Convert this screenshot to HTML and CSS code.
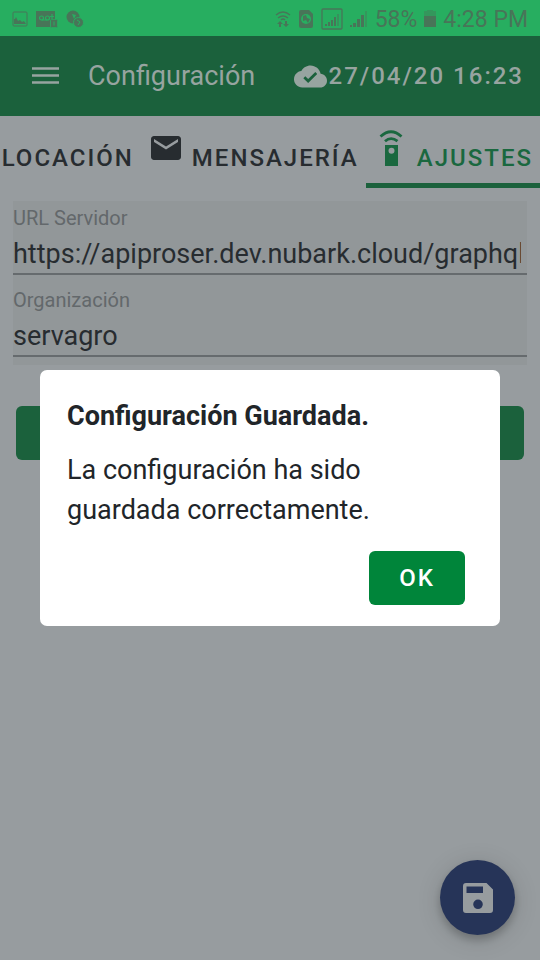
FILE: index.html
```html
<!DOCTYPE html>
<html lang="es">
<head>
<meta charset="utf-8">
<meta name="viewport" content="width=device-width, initial-scale=1">
<title>Configuración</title>
<link rel="stylesheet" href="styles.css">
</head>
<body>
<div class="status">
  <div class="status-group">
    <svg width="16" height="16" viewBox="0 0 16 16"><rect x="1" y="1" width="14" height="14" rx="1" fill="none" stroke="currentColor"/><path d="M2 13V8l1 0 1-2 2 4 2-1 2 2 2-1 2 3z" fill="currentColor"/></svg>
    <svg class="status-voice" width="22" height="18" viewBox="0 0 22 18"><path d="M0 1h19v9h-5v7H0z" fill="currentColor"/><g fill="none" stroke="#27ae60" stroke-width="1.200"><circle cx="5.500" cy="8" r="2"/><circle cx="11.500" cy="8" r="2"/><path d="M5.500 10h6M16 4v5M14 6.500h4"/></g><rect x="14.500" y="9.500" width="7" height="8" rx="1" fill="currentColor" stroke="#27ae60" stroke-width=".7"/><path d="M18 11.500v4" stroke="#27ae60"/></svg>
    <svg width="18" height="18" viewBox="0 0 18 18"><circle cx="7" cy="7" r="6.500" fill="currentColor"/><path d="M6 4l4 1-2 4z" fill="#27ae60"/><circle cx="12.500" cy="12.500" r="5" fill="currentColor" stroke="#27ae60"/><path d="M11 10l3 2-2 3" fill="none" stroke="#27ae60"/></svg>
  </div>
  <div class="status-group status-right">
    <svg width="16" height="20" viewBox="0 0 16 20"><path d="M1 6q7-6 14 0M3 9q5-4 10 0M6 11q2-2 4 0" fill="none" stroke="currentColor" stroke-width="1.300"/><path d="M5 12l3 3H6v3H4v-3H2zM11 18l-3-3h2v-3h2v3h2z" fill="currentColor"/></svg>
    <svg width="16" height="20" viewBox="0 0 16 20"><path d="M3 1h8l4 4v12q0 2-2 2H3q-2 0-2-2V3q0-2 2-2z" fill="currentColor"/><circle cx="8" cy="10" r="5" fill="#27ae60"/><path d="M5 7l3-1 1 3 3 1-2 4-2-3-3 1z" fill="currentColor"/></svg>
    <svg class="status-sim" width="22" height="22" viewBox="0 0 22 22"><rect x="1" y="1" width="20" height="20" rx="1" fill="none" stroke="currentColor" stroke-width="1.300"/><path d="M4 16h2v2H4zM7 14h2v4H7zM10 12h2v6h-2zM13 9h2v9h-2z" fill="currentColor"/><path d="M16 6h2v12h-2z" fill="currentColor" opacity=".5"/></svg>
    <svg width="18" height="20" viewBox="0 0 18 20"><path d="M0 16h2v2H0zM3 14h3v4H3zM7 10h3v8H7zM11 6h3v12h-3z" fill="currentColor"/><path d="M15 2h2v16h-2z" fill="currentColor" opacity=".4"/></svg>
    <span>58%</span>
    <svg width="12" height="20" viewBox="0 0 12 20"><path d="M3 1h6v1h3v5H0V2h3z" fill="currentColor" opacity=".4"/><path d="M0 7h12v11H0z" fill="currentColor"/></svg>
    <span>4:28 PM</span>
  </div>
</div>

<header class="bar">
  <button class="menu" type="button" aria-label="Menú"><svg width="28" height="18" viewBox="0 0 28 18"><path d="M0 1.500h27M0 8.500h27M0 15.500h27" stroke="currentColor" stroke-width="2.700"/></svg></button>
  <h1>Configuración</h1>
  <button class="sync" type="button"><svg width="33" height="33" viewBox="0 0 24 24"><path fill="currentColor" d="M19.350 10.040C18.670 6.590 15.640 4 12 4 9.110 4 6.600 5.640 5.350 8.040 2.340 8.360 0 10.910 0 14c0 3.310 2.690 6 6 6h13c2.760 0 5-2.240 5-5 0-2.640-2.050-4.780-4.650-4.960zM10.300 16.700l-3.500-3.500 1.400-1.400 2.100 2.100 5.200-5.200 1.400 1.400z"/></svg>27/04/20 16:23</button>
</header>

<nav class="tabs" role="tablist">
  <button class="tab" type="button" role="tab">LOCACIÓN</button>
  <button class="tab" type="button" role="tab"><svg width="36" height="36" viewBox="0 0 24 24"><path fill="currentColor" d="M20 4H4c-1.100 0-2 .9-2 2v12c0 1.100.9 2 2 2h16c1.100 0 2-.9 2-2V6c0-1.100-.9-2-2-2zm0 4-8 5-8-5V6l8 5 8-5v2z"/></svg>MENSAJERÍA</button>
  <button class="tab active" type="button" role="tab" aria-selected="true"><svg width="36" height="36" viewBox="0 0 36 36"><path d="M7.500 6.500Q18-3 28.500 6.500M12 11.200Q18 6 24.500 11.200" fill="none" stroke="currentColor" stroke-width="2.800"/><path fill="currentColor" fill-rule="evenodd" d="M12 15h13v21H12zM18.500 17.800a3 3 0 1 0 0 6 3 3 0 1 0 0-6z"/></svg>AJUSTES</button>
</nav>

<main>
  <form class="form">
    <div class="field">
      <label for="url">URL Servidor</label>
      <input id="url" type="text" value="https://apiproser.dev.nubark.cloud/graphql">
    </div>
    <div class="field">
      <label for="org">Organización</label>
      <input id="org" type="text" value="servagro">
    </div>
    <button class="submit" type="button" aria-label="Guardar configuración"></button>
  </form>
</main>

<button class="fab" type="button" aria-label="Guardar"><svg width="32" height="32" viewBox="0 0 32 32"><path fill="currentColor" fill-rule="evenodd" d="M4 1h20.500L31 7.500V28q0 3-3 3H4q-3 0-3-3V4q0-3 3-3zM4.500 4.500v6.500h16.500V4.500zM16 17.500a4.800 4.800 0 1 0 0 9.600 4.800 4.800 0 1 0 0-9.600z"/></svg></button>

<div class="overlay">
  <section class="dialog" role="dialog" aria-labelledby="dialog-title">
    <h2 id="dialog-title">Configuración Guardada.</h2>
    <p>La configuración ha sido guardada correctamente.</p>
    <button class="ok" type="button">OK</button>
  </section>
</div>
</body>
</html>
```

FILE: styles.css
```css
* {
  box-sizing: border-box;
}

body {
  margin: 0;
  min-height: 100vh;
  background: #979c9f;
  color: #272c30;
  font-family: Roboto, sans-serif;
  font-size: 27px;
}

button,
input {
  border: 0;
  padding: 0;
  background: none;
  color: inherit;
  font: inherit;
}

svg {
  display: block;
  flex: none;
}

.status {
  display: flex;
  justify-content: space-between;
  align-items: center;
  height: 36px;
  padding: 2px 12px 0;
  background: #27ae60;
  color: #487558;
  font-size: 23px;
}

.status-group {
  display: flex;
  align-items: center;
  gap: 8px;
}

.status-right {
  gap: 7px;
}

.bar {
  display: flex;
  align-items: center;
  height: 80px;
  padding: 0 16px 0 32px;
  background: #1b613c;
  color: #97a4a0;
}

.menu {
  margin-right: 28px;
}

.bar h1 {
  margin: 0;
  font-size: 27px;
  font-weight: 400;
}

.sync {
  display: flex;
  align-items: center;
  gap: 2px;
  margin-left: auto;
  font-size: 24px;
  font-weight: 500;
  letter-spacing: 2px;
  white-space: nowrap;
}

.tabs {
  display: flex;
  justify-content: flex-end;
  height: 72px;
  overflow: hidden;
}

.tab {
  display: flex;
  flex: none;
  align-items: center;
  gap: 8px;
  padding: 16px 7px 0;
  border-bottom: 5px solid transparent;
  font-size: 24px;
  font-weight: 500;
  letter-spacing: 2px;
}

.tab svg {
  margin-bottom: 20px;
}

.tab.active {
  border-color: #1b613c;
  color: #1a683f;
}

.form {
  padding: 13px 13px 0;
}

.field {
  height: 82px;
  padding-top: 4px;
  background: #929799;
}

.field label {
  display: block;
  color: #63686b;
  font-size: 20px;
  line-height: 26px;
}

.field input {
  display: block;
  width: 100%;
  height: 44px;
  padding: 4px 6px 0 0;
  border-bottom: 2px solid #666b6e;
}

.submit {
  display: block;
  width: calc(100% - 6px);
  height: 54px;
  margin: 41px auto 0;
  border-radius: 6px;
  background: #1b613c;
}

.fab {
  position: fixed;
  right: 25px;
  bottom: 25px;
  display: grid;
  place-items: center;
  width: 75px;
  height: 75px;
  border-radius: 50%;
  background: #263458;
  color: #979c9f;
  box-shadow: 0 5px 9px rgba(0, 0, 0, .2), 0 4px 24px rgba(0, 0, 0, .15);
}

.overlay {
  position: fixed;
  inset: 36px 0 0;
  display: flex;
  align-items: center;
  padding: 0 40px;
}

.dialog {
  display: flex;
  flex-direction: column;
  width: 100%;
  padding: 26px 35px 21px 27px;
  border-radius: 7px;
  background: #fff;
  color: #212529;
  line-height: 40px;
}

.dialog h2 {
  margin: 0 0 14px;
  font-size: 27px;
  font-weight: 700;
}

.dialog p {
  max-width: 340px;
  margin: 0 0 21px;
}

.ok {
  align-self: flex-end;
  width: 96px;
  height: 54px;
  border-radius: 6px;
  background: #00853a;
  color: #fff;
  font-size: 24px;
  font-weight: 500;
  letter-spacing: 2px;
}
```
